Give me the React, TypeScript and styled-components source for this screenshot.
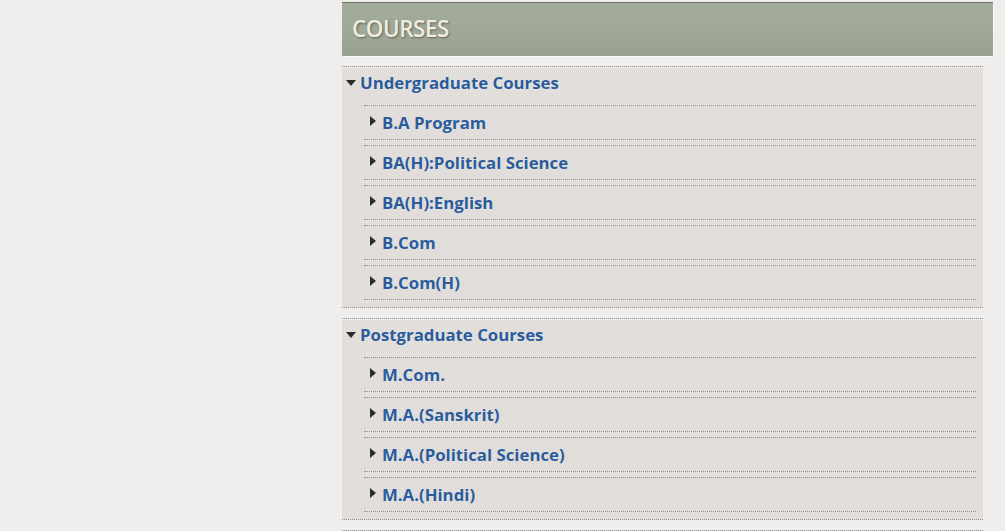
import React from "react";
import styled, { createGlobalStyle } from "styled-components";

const Global = createGlobalStyle`
  html, body { margin: 0; padding: 0; }
  body {
    background: #f0eeec;
    font-family: "Open Sans", "Liberation Sans", sans-serif;
    width: 1005px;
    height: 531px;
    overflow: hidden;
  }
`;

const Column = styled.div`
  margin-left: 342px;
  width: 651px;
  padding-top: 2px;
`;

const Header = styled.div`
  height: 53px;
  border-top: 1px solid #6e7666;
  background: linear-gradient(180deg, #a4ac9c 0%, #9fa796 60%, #99a190 100%);
  display: flex;
  align-items: center;
  padding-left: 10px;
  box-shadow: 1px 1px 0 #fbfaf8;
`;

const Title = styled.h2`
  margin: 0;
  font-family: "Open Sans", "Liberation Sans", sans-serif;
  font-weight: 600;
  font-size: 22.5px;
  letter-spacing: -0.5px;
  color: #efede0;
  text-shadow: 1px 1px 2px rgba(40, 45, 35, 0.55);
  line-height: 1;
`;

const GroupList = styled.ul`
  list-style: none;
  margin: 10px 10px 0 0;
  padding: 0;
`;

const Group = styled.li`
  background: #e1dedb;
  border-top: 1px dotted #8f8c89;
  border-bottom: 1px dotted #8f8c89;
  padding-bottom: 2px;
  margin-bottom: 10px;
`;

const GroupHead = styled.div`
  height: 34px;
  box-sizing: border-box;
  padding: 0 0 2px 4px;
  display: flex;
  align-items: center;
  gap: 4px;
  box-shadow: inset 0 1px 0 #f3f1ef;
`;

const DownArrow = styled.span`
  width: 0;
  height: 0;
  border-left: 5px solid transparent;
  border-right: 5px solid transparent;
  border-top: 6px solid #2f2b28;
  margin-top: -1px;
`;

const RightArrow = styled.span`
  width: 0;
  height: 0;
  border-top: 5.5px solid transparent;
  border-bottom: 5.5px solid transparent;
  border-left: 6px solid #2f2b28;
  margin-top: -5px;
`;

const Label = styled.a`
  color: #2a5b9b;
  font-weight: 700;
  font-size: 16.8px;
  text-decoration: none;
  text-shadow: 0 0 1px rgba(255, 255, 255, 0.6);
  line-height: 1;
`;

const SubList = styled.ul`
  list-style: none;
  margin: 4px 7px 0 22px;
  padding: 0;
`;

const Item = styled.li`
  height: 33px;
  box-sizing: border-box;
  border-top: 1px dotted #8f8c89;
  border-bottom: 1px dotted #8f8c89;
  height: 35px;
  margin-bottom: 5px;
  display: flex;
  align-items: center;
  padding: 2px 0 0 6px;
  gap: 6px;
  background: #e0ddda;
`;

const groups = [
  {
    title: "Undergraduate Courses",
    items: [
      "B.A Program",
      "BA(H):Political Science",
      "BA(H):English",
      "B.Com",
      "B.Com(H)",
    ],
  },
  {
    title: "Postgraduate Courses",
    items: [
      "M.Com.",
      "M.A.(Sanskrit)",
      "M.A.(Political Science)",
      "M.A.(Hindi)",
    ],
  },
  { title: "", items: [] as string[] },
];

export default function App() {
  return (
    <>
      <Global />
      <Column>
        <Header>
          <Title>COURSES</Title>
        </Header>
        <GroupList>
          {groups.map((g, i) => (
            <Group key={i}>
              <GroupHead>
                {g.title && <DownArrow />}
                <Label href="#">{g.title}</Label>
              </GroupHead>
              {g.items.length > 0 && (
                <SubList>
                  {g.items.map((it) => (
                    <Item key={it}>
                      <RightArrow />
                      <Label href="#">{it}</Label>
                    </Item>
                  ))}
                </SubList>
              )}
            </Group>
          ))}
        </GroupList>
      </Column>
    </>
  );
}
